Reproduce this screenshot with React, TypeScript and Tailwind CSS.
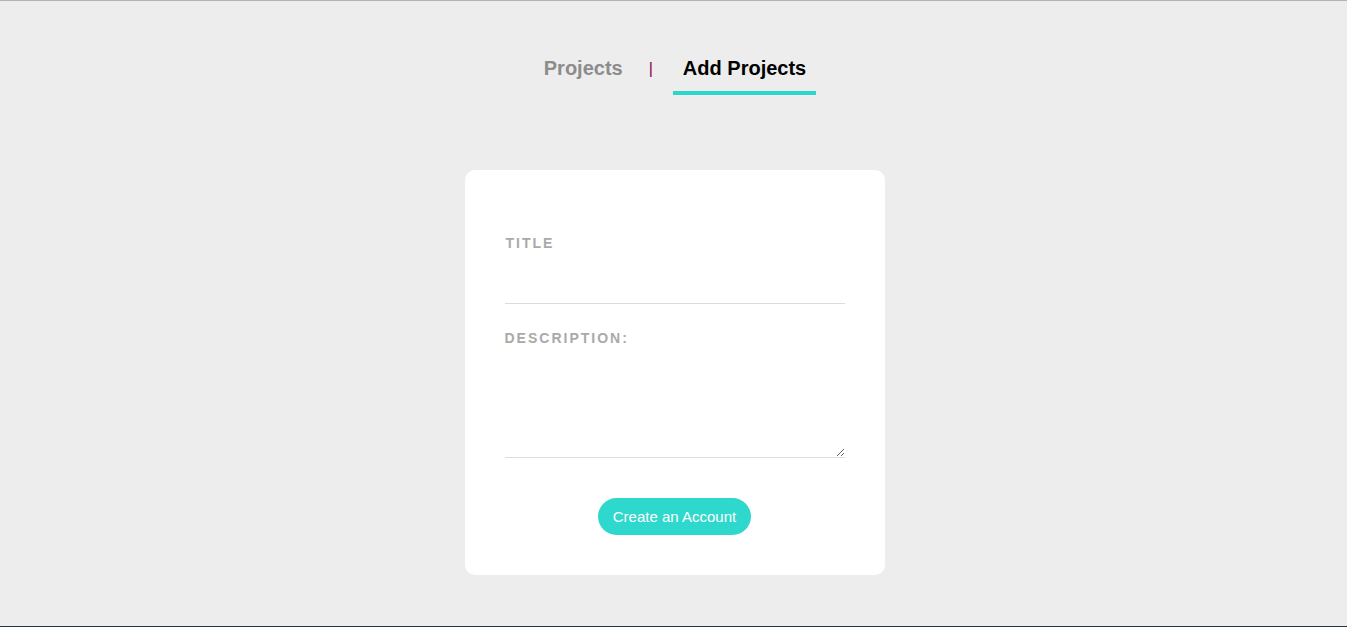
import React from 'react';

export default function App() {
  return (
    <div
      className="min-h-[627px] bg-[#ededed] border-t border-[#b3b3b3] border-b border-b-[#1e3a40] flex flex-col items-center"
      style={{ fontFamily: '"Liberation Sans", Arial, sans-serif' }}
    >
      <nav className="mt-[46px] ml-[3px] flex items-start">
        <div className="px-[10px] pt-[10px] pb-[12px] text-[20px] font-bold leading-[23px] text-[#8c8c8c]">Projects</div>
        <div className="ml-[16px] mr-[20px] pt-[13px] text-[16px] leading-[18px] text-[#8b0045]">|</div>
        <div className="px-[10px] pt-[10px] pb-[11px] text-[20px] font-bold leading-[23px] text-black border-b-4 border-[#2dd6cc]">
          Add Projects
        </div>
      </nav>

      <form className="mt-[75px] ml-[2px] w-[420px] bg-white rounded-[10px] px-[40px] pt-[65px] pb-[40px]">
        <label className="block ml-[1px] text-[14px] font-bold tracking-[2px] leading-[16px] text-[#a9a9a9]">TITLE</label>
        <input type="text" className="block w-full h-[53px] border-b border-[#dcdcdc] outline-none" />

        <label className="block mt-[26px] text-[14px] font-bold tracking-[2px] leading-[16px] text-[#a9a9a9]">DESCRIPTION:</label>
        <textarea className="block w-full h-[111px] mt-[1px] border-b border-[#dcdcdc] outline-none resize-y" />

        <div className="mt-[40px] flex justify-center">
          <button type="button" className="h-[37px] px-[15px] rounded-full bg-[#2ed8cc] text-white text-[15px] leading-[17px]">
            Create an Account
          </button>
        </div>
      </form>
    </div>
  );
}
